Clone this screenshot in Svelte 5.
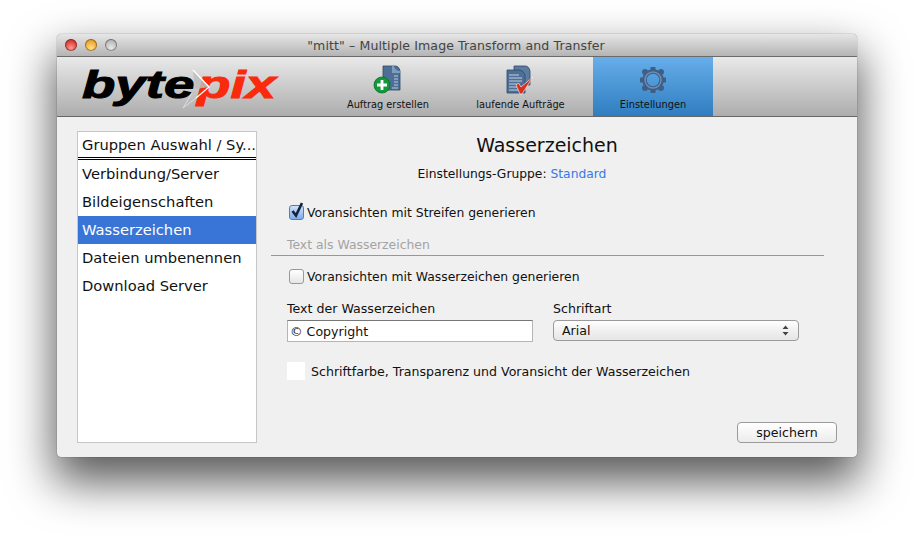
<script>
	const groups = ['Verbindung/Server', 'Bildeigenschaften', 'Wasserzeichen', 'Dateien umbenennen', 'Download Server'];
	let selected = $state('Wasserzeichen');
	let stripes = $state(true);
	let watermark = $state(false);
	let text = $state('© Copyright');
</script>

<div class="page">
	<div class="window">
		<header class="titlebar">
			<div class="lights">
				<span class="light red"></span>
				<span class="light yellow"></span>
				<span class="light grey"></span>
			</div>
			<span class="title">"mitt" – Multiple Image Transform and Transfer</span>
		</header>

		<nav class="toolbar">
			<div class="logo">
				<div class="wordmark"><span class="byte">byte</span><span class="pix">pix</span></div>
				<svg class="arrow" width="30" height="40" viewBox="0 0 30 40" aria-hidden="true">
					<path d="M11 1 L28 18 L13 20 Z" fill="#bdbdbd" opacity="0.85" />
					<path d="M11 1 L27 18 L14 29" fill="none" stroke="#fff" stroke-width="1.3" />
					<path d="M10 24 L1 39 L14 29" fill="none" stroke="#e4e4e4" stroke-width="0.8" />
				</svg>
			</div>
			<div class="tools">
				<button type="button" class="tool">
					<svg width="30" height="30" viewBox="-1 0 30 30" aria-hidden="true">
						<path d="M9 1 H21 Q25 1 26 6 V25 H13 V14 H9 Z" fill="#4d6f96" stroke="#2f4a6a" stroke-width="0.8" />
						<path d="M20 1 Q21 6 26 6 V8 H18 V1 Z" fill="#7f9cbc" />
						<path d="M20 11 H24 M20 14 H24 M20 17 H24 M20 20 H24 M18 23 H24" stroke="#b9cadc" stroke-width="1" />
						<circle cx="8" cy="20" r="8" fill="#129a3a" stroke="#0b6f28" stroke-width="0.8" />
						<path d="M8 15 V25 M3 20 H13" stroke="#fff" stroke-width="2.8" />
					</svg>
					<span>Auftrag erstellen</span>
				</button>
				<button type="button" class="tool">
					<svg width="30" height="30" viewBox="0 0 30 30" aria-hidden="true">
						<path d="M8 1 H19 Q23 1 24 6 V20 H8 Z" fill="#5b7ba0" stroke="#2f4a6a" stroke-width="0.8" />
						<path d="M1 5 H14 Q18 6 19 10 V28 H1 Z" fill="#4d6f96" stroke="#2f4a6a" stroke-width="0.8" />
						<path d="M3 10 H13 M3 13 H16 M3 16 H16 M3 19 H11 M3 22 H11 M3 25 H13" stroke="#c3d1e0" stroke-width="1" />
						<path d="M10 20 L12.5 18 L15 22 L27 12 L16 29 H14 Z" fill="#d9301e" stroke="#fff" stroke-width="0.6" stroke-linejoin="round" />
					</svg>
					<span>laufende Aufträge</span>
				</button>
				<button type="button" class="tool active">
					<svg width="30" height="30" viewBox="0 0 30 30" aria-hidden="true">
						<g fill="#3f5f85">
							<rect x="12.5" y="2" width="5" height="5" />
							<rect x="12.5" y="23" width="5" height="5" />
							<rect x="2" y="12.5" width="5" height="5" />
							<rect x="23" y="12.5" width="5" height="5" />
							<circle cx="7" cy="7" r="3" />
							<circle cx="23" cy="7" r="3" />
							<circle cx="7" cy="23" r="3" />
							<circle cx="23" cy="23" r="3" />
						</g>
						<circle cx="15" cy="15" r="8.5" fill="none" stroke="#3f5f85" stroke-width="4.5" />
						<circle cx="15" cy="15" r="8" fill="none" stroke="#6d8fb5" stroke-width="1.4" />
					</svg>
					<span>Einstellungen</span>
				</button>
			</div>
		</nav>

		<main class="content">
			<aside class="sidebar">
				<div class="list-head">Gruppen Auswahl / Sy...</div>
				<ul>
					{#each groups as group}
						<li class:selected={group === selected}>
							<button type="button" onclick={() => (selected = group)}>{group}</button>
						</li>
					{/each}
				</ul>
			</aside>

			<section class="panel">
				<h1>Wasserzeichen</h1>
				<p class="group-line">Einstellungs-Gruppe: <span class="link">Standard</span></p>

				<label class="check first">
					<input type="checkbox" bind:checked={stripes} />
					<span class="box" class:on={stripes}>
						{#if stripes}
							<svg width="16" height="17" viewBox="0 0 16 17" aria-hidden="true">
								<path d="M3.5 9 L7 13.5 L13 1" fill="none" stroke="#14233f" stroke-width="2.6" />
							</svg>
						{/if}
					</span>
					Voransichten mit Streifen generieren
				</label>

				<h2>Text als Wasserzeichen</h2>

				<label class="check">
					<input type="checkbox" bind:checked={watermark} />
					<span class="box" class:on={watermark}></span>
					Voransichten mit Wasserzeichen generieren
				</label>

				<div class="fields">
					<div class="field text-field">
						<span>Text der Wasserzeichen</span>
						<input type="text" bind:value={text} />
					</div>
					<div class="field font-field">
						<span>Schriftart</span>
						<div class="select">
							Arial
							<svg width="7" height="11" viewBox="0 0 7 11" aria-hidden="true">
								<path d="M3.5 0.5 L6.5 4 H0.5 Z M3.5 10.5 L6.5 7 H0.5 Z" fill="#444" />
							</svg>
						</div>
					</div>
				</div>

				<div class="color-row">
					<span class="swatch"></span>
					Schriftfarbe, Transparenz und Voransicht der Wasserzeichen
				</div>

				<div class="actions">
					<button type="button" class="save">speichern</button>
				</div>
			</section>
		</main>
	</div>
</div>

<style>
	:global(body) {
		margin: 0;
		background: #fff;
	}

	.page {
		height: 536px;
		box-sizing: border-box;
		padding: 34px 0 0 57px;
		overflow: hidden;
	}

	.window {
		width: 800px;
		height: 423px;
		display: flex;
		flex-direction: column;
		border-radius: 5px 5px 4px 4px;
		background: #f0f0f0;
		font-family: "DejaVu Sans", sans-serif;
		color: #111;
		box-shadow:
			0 0 1px 0 rgba(0, 0, 0, 0.75),
			0 22px 45px 3px rgba(0, 0, 0, 0.65);
		overflow: hidden;
	}

	.titlebar {
		height: 22px;
		flex: none;
		position: relative;
		display: flex;
		align-items: center;
		justify-content: center;
		background: linear-gradient(#e6e6e6, #b4b4b4);
		border-bottom: 1px solid #6a6a6a;
	}

	.lights {
		position: absolute;
		left: 8px;
		top: 5px;
		display: flex;
		gap: 8px;
	}

	.light {
		width: 12px;
		height: 12px;
		border-radius: 50%;
		box-shadow: inset 0 0 0 1px rgba(0, 0, 0, 0.35);
	}

	.red { background: radial-gradient(circle at 50% 75%, #ff9a94, #e0403a 60%, #b92b28); }
	.yellow { background: radial-gradient(circle at 50% 75%, #ffe08a, #f0a932 60%, #c98a20); }
	.grey { background: radial-gradient(circle at 50% 75%, #e8e8e8, #bdbdbd 60%, #999); }

	.title {
		font-size: 12.55px;
		color: #444;
		letter-spacing: 0.1px;
		margin: 1px 0 0 -2px;
	}

	.toolbar {
		height: 59px;
		flex: none;
		display: flex;
		background: linear-gradient(#e9e9e9, #adadad);
		border-bottom: 1px solid #666;
	}

	.logo {
		width: 271px;
		flex: none;
		position: relative;
		padding: 6px 0 0 25px;
		box-sizing: border-box;
		font-family: "Liberation Sans", sans-serif;
		font-style: italic;
		font-weight: 700;
		font-size: 39px;
		line-height: 44px;
		-webkit-text-stroke: 1px currentColor;
	}

	.wordmark {
		display: inline-flex;
		transform: scaleX(1.4);
		transform-origin: left center;
		white-space: nowrap;
	}

	.byte {
		color: #000;
	}

	.pix {
		color: #fa2a0c;
		margin-left: 2px;
	}

	.arrow {
		position: absolute;
		left: 125px;
		top: 12px;
	}

	.tools {
		display: flex;
		gap: 12.5px;
	}

	.tool {
		width: 120px;
		height: 59px;
		padding: 8px 0 0;
		border: 0;
		background: transparent;
		display: flex;
		flex-direction: column;
		align-items: center;
		font: inherit;
		font-size: 9.8px;
		color: #111;
		gap: 4px;
	}

	.tool svg {
		display: block;
	}

	.tool.active {
		background: linear-gradient(#67aeea, #2f7dc0);
	}

	.content {
		flex: 1;
		display: flex;
		padding: 14px 20px 14px 20px;
		min-height: 0;
	}

	.sidebar {
		width: 180px;
		height: 312px;
		flex: none;
		box-sizing: border-box;
		border: 1px solid #c6c6c6;
		background: #fff;
		font-size: 14.7px;
	}

	.list-head {
		height: 25px;
		line-height: 26px;
		padding-left: 4px;
		border-bottom: 3px double #000;
		white-space: nowrap;
	}

	ul {
		list-style: none;
		margin: 0;
		padding: 0;
	}

	li button {
		display: block;
		width: 100%;
		height: 28px;
		padding: 0 0 2px 4px;
		border: 0;
		background: transparent;
		font: inherit;
		color: #111;
		text-align: left;
	}

	li.selected button {
		background: #3875d7;
		color: #fff;
	}

	.panel {
		flex: 1;
		position: relative;
		display: flex;
		flex-direction: column;
		padding-left: 14px;
		font-size: 12.6px;
	}

	h1 {
		margin: 3px 0 0;
		padding-right: 14px;
		text-align: center;
		font-size: 19px;
		font-weight: 400;
		line-height: 22px;
	}

	.group-line {
		margin: 10px 84px 0 0;
		text-align: center;
		line-height: 16px;
		font-size: 12.3px;
	}

	.link {
		color: #3a78e6;
	}

	.check {
		display: flex;
		align-items: center;
		height: 18px;
		margin-left: 18px;
		gap: 3px;
		font-size: 12.4px;
	}

	.check input {
		display: none;
	}

	.first {
		margin-top: 21px;
	}

	.box {
		width: 13px;
		height: 13px;
		position: relative;
		border: 1px solid #999;
		border-radius: 3px;
		background: linear-gradient(#fff, #e6e6e6);
		flex: none;
	}

	.box.on {
		border-color: #5a7ba8;
		background: linear-gradient(#cfe2fa, #7fadea);
	}

	.box svg {
		position: absolute;
		left: -1px;
		top: -4px;
	}

	h2 {
		margin: 16px 13px 0 0;
		padding: 0 0 2px 16px;
		font-size: 12.4px;
		font-weight: 400;
		line-height: 16px;
		color: #a3a3a3;
		border-bottom: 1px solid #aea41c;
	}

	h2 + .check {
		margin-top: 11px;
	}

	.fields {
		display: flex;
		margin: 16px 0 0 16px;
		gap: 20px;
	}

	.field {
		display: flex;
		flex-direction: column;
		gap: 4px;
	}

	.field span {
		line-height: 15px;
	}

	.text-field input {
		width: 246px;
		height: 22px;
		box-sizing: border-box;
		padding: 0 3px 0 2px;
		border: 1px solid #b5b5b5;
		border-top-color: #777;
		background: #fff;
		font: inherit;
		color: #111;
		outline: none;
	}

	.select {
		width: 246px;
		height: 21px;
		box-sizing: border-box;
		padding: 0 9px 0 8px;
		display: flex;
		align-items: center;
		justify-content: space-between;
		border: 1px solid #9a9a9a;
		border-radius: 4px;
		background: linear-gradient(#fff, #efefef 55%, #e6e6e6);
	}

	.color-row {
		display: flex;
		align-items: center;
		margin: 20px 0 0 16px;
		gap: 6px;
		height: 18px;
	}

	.swatch {
		width: 18px;
		height: 18px;
		background: #fff;
	}

	.actions {
		position: absolute;
		right: 0;
		bottom: 0;
	}

	.save {
		width: 100px;
		height: 21px;
		padding: 0;
		border: 1px solid #9a9a9a;
		border-radius: 4px;
		background: linear-gradient(#fff, #ececec);
		font: inherit;
		color: #111;
	}
</style>
